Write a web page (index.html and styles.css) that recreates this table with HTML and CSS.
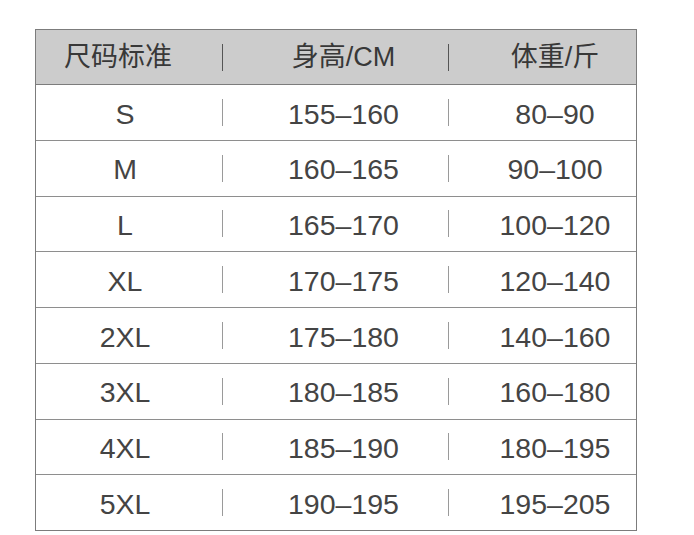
FILE: index.html
```html
<!DOCTYPE html>
<html lang="zh">
<head>
<meta charset="utf-8">
<title>尺码表</title>
<link rel="stylesheet" href="styles.css">
</head>
<body>
<div class="table">
  <div class="row head">
    <div class="cell c1 h1">尺码标准</div><div class="sep"></div>
    <div class="cell c2">身高/CM</div><div class="sep"></div>
    <div class="cell c3">体重/斤</div>
  </div>
  <div class="row"><div class="cell c1">S</div><div class="sep"></div><div class="cell c2">155–160</div><div class="sep"></div><div class="cell c3">80–90</div></div>
  <div class="row"><div class="cell c1">M</div><div class="sep"></div><div class="cell c2">160–165</div><div class="sep"></div><div class="cell c3">90–100</div></div>
  <div class="row"><div class="cell c1">L</div><div class="sep"></div><div class="cell c2">165–170</div><div class="sep"></div><div class="cell c3">100–120</div></div>
  <div class="row"><div class="cell c1">XL</div><div class="sep"></div><div class="cell c2">170–175</div><div class="sep"></div><div class="cell c3">120–140</div></div>
  <div class="row"><div class="cell c1">2XL</div><div class="sep"></div><div class="cell c2">175–180</div><div class="sep"></div><div class="cell c3">140–160</div></div>
  <div class="row"><div class="cell c1">3XL</div><div class="sep"></div><div class="cell c2">180–185</div><div class="sep"></div><div class="cell c3">160–180</div></div>
  <div class="row"><div class="cell c1">4XL</div><div class="sep"></div><div class="cell c2">185–190</div><div class="sep"></div><div class="cell c3">180–195</div></div>
  <div class="row last"><div class="cell c1">5XL</div><div class="sep"></div><div class="cell c2">190–195</div><div class="sep"></div><div class="cell c3">195–205</div></div>
</div>
</body>
</html>
```
FILE: styles.css
```css
html, body {
  margin: 0;
  padding: 0;
  background: #ffffff;
}
body {
  padding: 29px 0 0 35px;
  font-family: "Liberation Sans", "Noto Sans CJK SC", sans-serif;
  color: #444444;
}
.table {
  width: 602px;
  box-sizing: border-box;
  border: 1px solid #7c7c7c;
}
.row {
  display: grid;
  grid-template-columns: 186px 1px 225px 1px 187px;
  align-items: center;
  height: 55.75px;
  box-sizing: border-box;
  border-bottom: 1px solid #8e8e8e;
}
.row.last {
  border-bottom: none;
  height: 54.75px;
}
.row.head {
  background: #cccccc;
  height: 55px;
  border-bottom-color: #7c7c7c;
}
.cell {
  font-size: 28.5px;
  text-align: center;
  line-height: 1;
  padding-top: 3px;
  white-space: nowrap;
}
.head .cell {
  font-size: 27px;
  padding-top: 0;
  color: #383838;
}
.c1 { padding-right: 8px; }
.c1.h1 { padding-right: 22px; }
.c2 { padding-left: 16px; }
.c3 { padding-left: 25px; }
.sep {
  width: 1px;
  height: 27px;
  background: #9a9a9a;
}
.head .sep {
  background: #555555;
}
```
